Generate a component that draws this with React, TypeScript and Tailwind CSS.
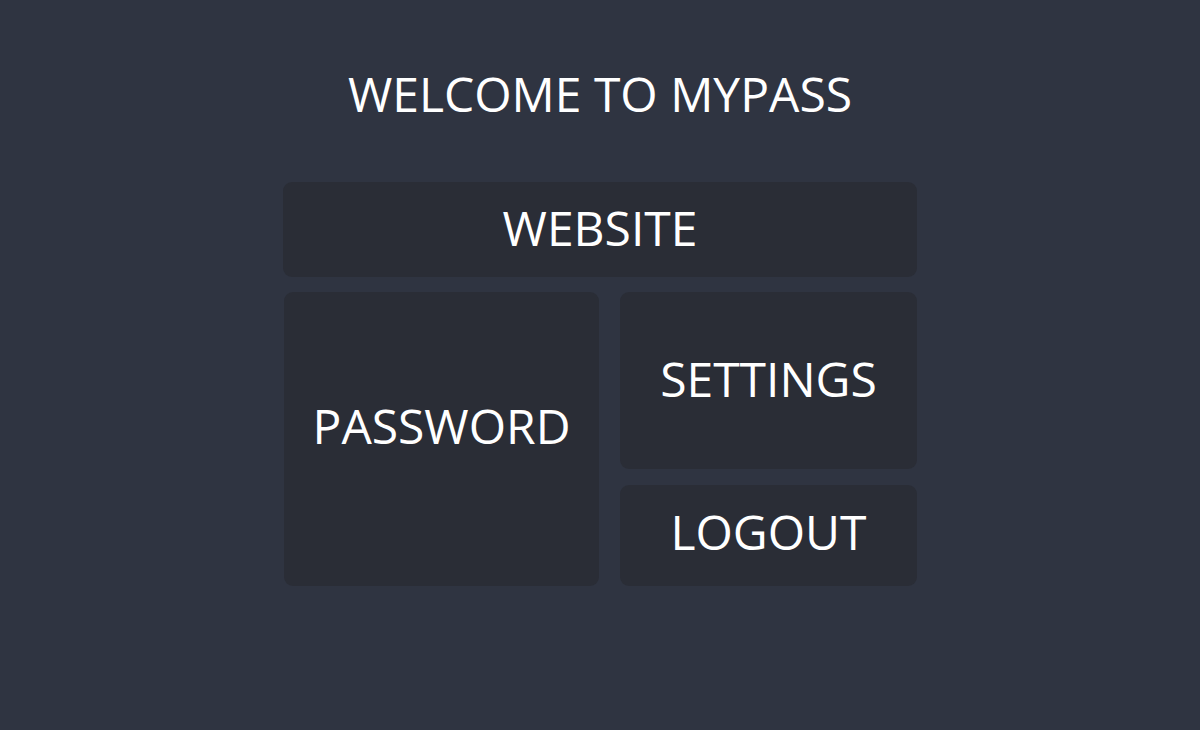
export default function App() {
  const tile =
    "flex items-center justify-center rounded-[9px] bg-[#2a2d36] text-white text-[48px] leading-none";

  return (
    <div className="min-h-[730px] w-full bg-[#2f3441] font-['Open_Sans',sans-serif]">
      <h1 className="pt-[68px] text-center text-[48px] leading-[52px] text-white">
        WELCOME TO MYPASS
      </h1>
      <div className="mx-auto mt-[62px] w-[634px]">
        <div className={`${tile} h-[95px] pb-[4px]`}>WEBSITE</div>
        <div className="mt-[15px] flex gap-[21px]">
          <div className={`${tile} ml-[1px] h-[294px] w-[315px] pb-[26px]`}>PASSWORD</div>
          <div className="flex flex-1 flex-col gap-[16px]">
            <div className={`${tile} h-[177px] pb-[4px]`}>SETTINGS</div>
            <div className={`${tile} h-[101px] pb-[8px]`}>LOGOUT</div>
          </div>
        </div>
      </div>
    </div>
  );
}
